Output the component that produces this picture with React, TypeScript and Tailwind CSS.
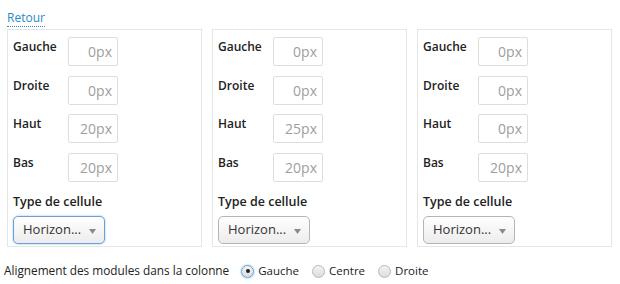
import React from "react";

const panels = [
  { values: ["0px", "0px", "20px", "20px"], focused: true },
  { values: ["0px", "0px", "25px", "20px"], focused: false },
  { values: ["0px", "0px", "0px", "20px"], focused: false },
];
const labels = ["Gauche", "Droite", "Haut", "Bas"];

function Panel({ values, focused }: { values: string[]; focused: boolean }) {
  return (
    <div className="w-[195px] h-[218px] border border-[#e6e6e6] bg-white pl-[5px] pt-[7px] flex flex-col">
      <div className="flex flex-col gap-[9.5px]">
        {labels.map((l, i) => (
          <div key={l} className="flex items-start h-[29px]">
            <div className="w-[55px] text-[12px] leading-[18px] pt-[1px] font-semibold text-[#222]">{l}</div>
            <div className="w-[50px] h-[29px] border border-[#dedede] rounded-[2px] bg-white flex items-center justify-end pr-[5px] text-[14px] text-[#9e9e9e]">
              {values[i]}
            </div>
          </div>
        ))}
      </div>
      <div className="mt-[11px] text-[12.5px] leading-[18px] font-semibold text-[#222]">Type de cellule</div>
      <div
        className={
          "relative mt-[5px] w-[92px] h-[28px] rounded-[5px] flex items-center pl-[9px] text-[13px] text-[#333] bg-gradient-to-b from-white to-[#ececec] " +
          (focused
            ? "border border-[#6b9fd9] shadow-[0_0_2px_rgba(30,140,190,0.6)]"
            : "border border-[#b4b4b4]")
        }
      >
        <span>Horizon...</span>
        <svg className="absolute left-[75px] top-[12px]" width="7" height="5" viewBox="0 0 7 5">
          <path d="M0 0 L7 0 L3.5 5 Z" fill="#8a8a8a" />
        </svg>
      </div>
    </div>
  );
}

function Radio({ checked, label }: { checked?: boolean; label: string }) {
  return (
    <div className="flex items-center gap-[4px]">
      <span
        className={
          "w-[13px] h-[13px] rounded-full flex items-center justify-center bg-gradient-to-b from-[#f4f4f4] to-[#dcdcdc] " +
          (checked ? "border border-[#6b9fd9] shadow-[0_0_2px_rgba(30,140,190,0.7)]" : "border border-[#b8b8b8]")
        }
      >
        {checked && <span className="w-[4px] h-[4px] rounded-full bg-[#222]" />}
      </span>
      <span className="text-[11.5px] text-[#222]">{label}</span>
    </div>
  );
}

export default function App() {
  return (
    <div className="w-[620px] h-[284px] bg-white" style={{ fontFamily: '"Open Sans", sans-serif' }}>
      <div className="pl-[7px] pt-[4px] h-[29px]">
        <span className="text-[12px] leading-[15px] text-[#2a8ac4] border-b border-dotted border-[#2a8ac4]">Retour</span>
      </div>
      <div className="flex gap-[10px] pl-[7px]">
        {panels.map((p, i) => (
          <Panel key={i} values={p.values} focused={p.focused} />
        ))}
      </div>
      <div className="flex items-center pl-[4px] mt-[15px] h-[18px]">
        <span className="text-[11.8px] text-[#222] mr-[12px]">Alignement des modules dans la colonne</span>
        <div className="flex items-center gap-[13px]">
          <Radio checked label="Gauche" />
          <Radio label="Centre" />
          <Radio label="Droite" />
        </div>
      </div>
    </div>
  );
}
